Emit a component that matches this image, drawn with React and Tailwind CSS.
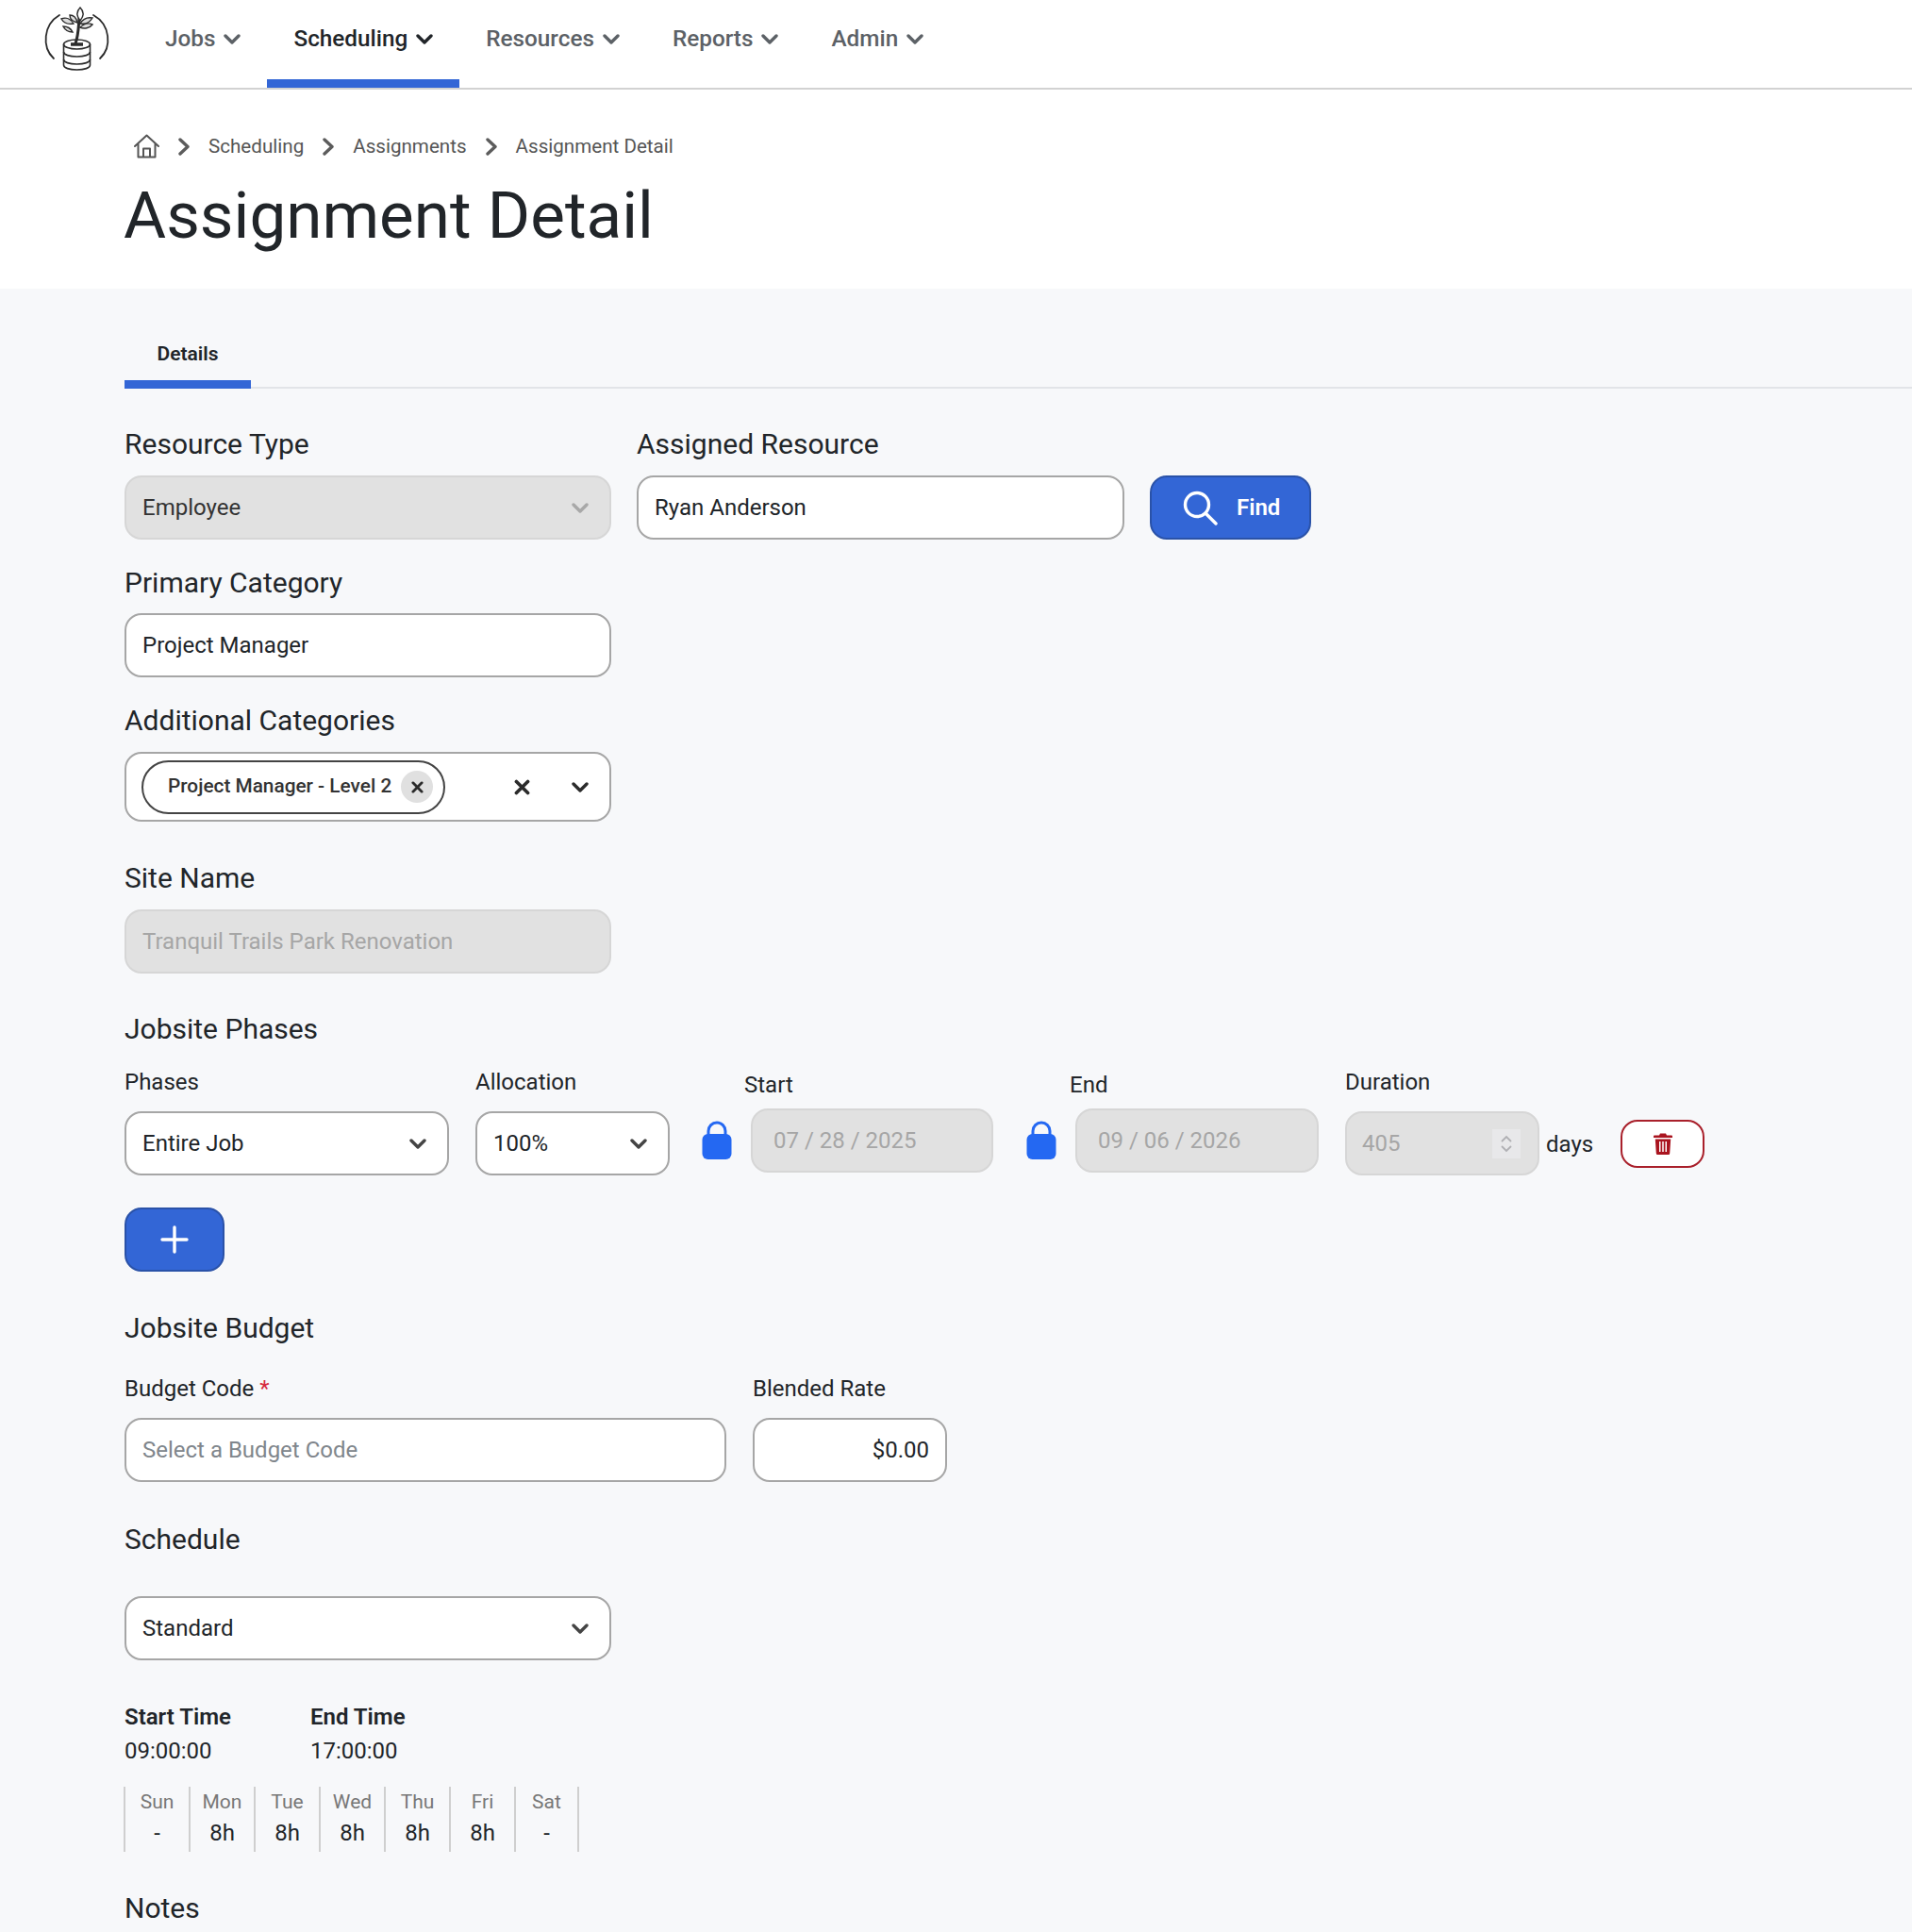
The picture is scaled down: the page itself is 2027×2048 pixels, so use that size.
import React from "react";

const Chevron = ({ className = "text-[#444]" }) => (
  <svg width="18" height="11" viewBox="0 0 18 11" fill="none" className={`shrink-0 ${className}`}>
    <path d="M2 2l7 7 7-7" stroke="currentColor" strokeWidth="3.4" strokeLinecap="round" strokeLinejoin="round" />
  </svg>
);

const Crumb = () => (
  <svg width="12" height="19" viewBox="0 0 12 19" fill="none" className="shrink-0 text-[#5c5c5c]">
    <path d="M2 2l8 7.500L2 17" stroke="currentColor" strokeWidth="3.4" strokeLinecap="round" strokeLinejoin="round" />
  </svg>
);

const Close = ({ size = 14 }) => (
  <svg width={size} height={size} viewBox="0 0 14 14" fill="none" className="text-[#2b2b2b]">
    <path d="M2 2l10 10M12 2L2 12" stroke="currentColor" strokeWidth="3" strokeLinecap="round" />
  </svg>
);

const Lock = ({ className = "" }) => (
  <svg width="32" height="42" viewBox="0 0 32 42" fill="none" className={`shrink-0 ${className}`}>
    <path d="M7 17V11a9 9 0 0 1 18 0v6" stroke="#2468f2" strokeWidth="3" />
    <rect x="0.5" y="14" width="31" height="27" rx="6" fill="#2468f2" />
  </svg>
);

const Logo = () => (
  <svg width="110" height="90" viewBox="0 0 110 90" fill="none" stroke="#2b2b2b" className="shrink-0">
    <path d="M33 16C16 26 14 50 27 62M69 16C87 26 89 50 76 62" strokeWidth="1.800" strokeLinecap="round" />
    <path d="M37.500 47v22c0 3 6 5 14 5s14-2 14-5V47" strokeWidth="1.600" />
    <ellipse cx="51.500" cy="47" rx="14" ry="5" strokeWidth="1.600" />
    <path d="M37.500 55c0 3 6 5 14 5s14-2 14-5M37.500 63c0 3 6 5 14 5s14-2 14-5" strokeWidth="1.600" />
    <path d="M50 46c3-8 3-14 4-27" strokeWidth="3" />
    <path d="M45 47h13" strokeWidth="3.500" />
    <path d="M55 8c-4 4-4 9 0 14 4-5 4-10 0-14z" strokeWidth="1.400" fill="#fff" />
    <path d="M35 20c5-2 10 0 13 5-5 1-10 0-13-5zM44 16c4 0 7 3 8 8-4-1-8-3-8-8z" strokeWidth="1.400" fill="#ddd" />
    <path d="M68 19c-5-1-10 1-13 6 5 1 10-1 13-6zM68 26c-4-2-9-1-13 3 4 2 10 1 13-3z" strokeWidth="1.400" fill="#ddd" />
    <path d="M37 28c4 0 8 2 10 6-4 0-8-2-10-6z" strokeWidth="1.400" fill="#ddd" />
  </svg>
);

const NavItem = ({ label, active }) => (
  <div
    className={`h-[93px] px-7 pb-0.5 flex items-center gap-[9px] border-b-[9px] text-[24.3px] font-medium ${
      active ? "border-[#3366d6] text-[#212529]" : "border-transparent text-[#5c6166]"
    }`}
  >
    {label}
    <Chevron className={active ? "text-[#212529]" : "text-[#5c6166]"} />
  </div>
);

const SectionLabel = ({ children, className = "" }) => (
  <div className={`h-9 leading-9 text-[30px] text-[#212529] ${className}`}>{children}</div>
);

const SmallLabel = ({ children, className = "" }) => (
  <div className={`h-[30px] leading-[30px] text-2xl text-[#212529] ${className}`}>{children}</div>
);

const Box = ({ children, className = "" }) => (
  <div
    className={`h-[68px] px-[17px] flex items-center justify-between rounded-[18px] border-2 border-[#a6a6a6] bg-white text-2xl text-[#212529] ${className}`}
  >
    {children}
  </div>
);

const Disabled = ({ children, className = "" }) => (
  <div
    className={`h-[68px] flex items-center rounded-[18px] border-2 border-[#d6d6d6] bg-[#e1e1e1] text-2xl text-[#a6a6a6] ${className}`}
  >
    {children}
  </div>
);

const days = [
  ["Sun", "-"],
  ["Mon", "8h"],
  ["Tue", "8h"],
  ["Wed", "8h"],
  ["Thu", "8h"],
  ["Fri", "8h"],
  ["Sat", "-"],
];

const App = () => {
  return (
    <div className="h-[2048px] overflow-hidden bg-white font-['Roboto',sans-serif]">
      {/* Top nav */}
      <nav className="flex h-[95px] border-b-2 border-[#d2d2d2] pl-[30px]">
        <Logo />
        <div className="ml-[7px] flex items-start">
          <NavItem label="Jobs" />
          <NavItem label="Scheduling" active />
          <NavItem label="Resources" />
          <NavItem label="Reports" />
          <NavItem label="Admin" />
        </div>
      </nav>

      {/* Page header */}
      <header className="h-[211px] pl-[132px] pt-[46px]">
        <div className="flex h-7 items-center gap-5 pl-[10px] text-[20.6px] text-[#555]">
          <svg width="27" height="26" viewBox="0 0 27 26" fill="none" className="shrink-0 text-[#555]">
            <path
              d="M1 13L13.500 1.500 26 13M4.500 10.500V24.500h18V10.500M10 24.500V15.500h7v9"
              stroke="currentColor"
              strokeWidth="2"
              strokeLinejoin="round"
              strokeLinecap="round"
            />
          </svg>
          <Crumb />
          <span>Scheduling</span>
          <Crumb />
          <span>Assignments</span>
          <Crumb />
          <span>Assignment Detail</span>
        </div>
        <h1 className="mt-[17px] -ml-px text-[69.2px] leading-[86px] font-normal text-[#212529]">Assignment Detail</h1>
      </header>

      {/* Form */}
      <main className="h-full bg-[#f7f8fa] pl-[132px] pt-[44px]">
        <div className="flex border-b-2 border-[#e2e4e8]">
          <div className="-mb-[2px] flex h-[62px] w-[134px] items-center justify-center border-b-[9px] border-[#3366d6] pb-[2px] text-[21px] font-semibold text-[#212529]">
            Details
          </div>
        </div>

        <div className="mt-[41px] flex gap-[27px]">
          <div className="w-[516px]">
            <SectionLabel className="mb-[15px]">Resource Type</SectionLabel>
            <Disabled className="justify-between pl-[17px] pr-[22px] !text-[#333]">
              Employee
              <Chevron className="text-[#a8a8a8]" />
            </Disabled>
          </div>
          <div className="w-[517px]">
            <SectionLabel className="mb-[15px]">Assigned Resource</SectionLabel>
            <Box>Ryan Anderson</Box>
          </div>
          <button className="mt-[51px] flex h-[68px] w-[171px] items-center gap-[20px] rounded-[18px] border-2 border-[#2a52a8] bg-[#3366d6] pl-[33px] text-2xl font-semibold text-white">
            <svg width="37" height="37" viewBox="0 0 37 37" fill="none" className="shrink-0">
              <circle cx="15" cy="15" r="12.500" stroke="white" strokeWidth="3.400" />
              <path d="M24 24l11 11" stroke="white" strokeWidth="3.400" strokeLinecap="round" />
            </svg>
            Find
          </button>
        </div>

        <SectionLabel className="mt-[28px] mb-[14px]">Primary Category</SectionLabel>
        <Box className="w-[516px]">Project Manager</Box>

        <SectionLabel className="mt-[28px] mb-[15px]">Additional Categories</SectionLabel>
        <div className="flex h-[74px] w-[516px] items-center rounded-[18px] border-2 border-[#a6a6a6] bg-white pl-4 pr-[22px]">
          <div className="flex h-[57px] w-[322px] items-center justify-between rounded-full border-2 border-[#444] pl-[26px] pr-[11px] text-[20.8px] font-medium text-[#333]">
            Project Manager - Level 2
            <span className="flex h-[34px] w-[34px] items-center justify-center rounded-full bg-[#e0e0e0]">
              <Close size={13} />
            </span>
          </div>
          <div className="ml-auto mr-[44px]">
            <Close size={17} />
          </div>
          <Chevron className="text-[#2b2b2b]" />
        </div>

        <SectionLabel className="mt-[42px] mb-[15px]">Site Name</SectionLabel>
        <Disabled className="w-[516px] px-[17px]">Tranquil Trails Park Renovation</Disabled>

        <SectionLabel className="mt-[41px] mb-[23px]">Jobsite Phases</SectionLabel>
        <div className="flex items-start">
          <div className="w-[344px]">
            <SmallLabel className="mb-4">Phases</SmallLabel>
            <Box className="pr-[22px]">
              Entire Job
              <Chevron />
            </Box>
          </div>
          <div className="ml-[28px] w-[206px]">
            <SmallLabel className="mb-4">Allocation</SmallLabel>
            <Box className="pr-[22px]">
              100%
              <Chevron />
            </Box>
          </div>
          <Lock className="ml-[34px] mt-[56px]" />
          <div className="ml-[20px] w-[257px] pt-[3px]">
            <SmallLabel className="-ml-[7px] mb-[10px]">Start</SmallLabel>
            <Disabled className="pl-[22px]">07 / 28 / 2025</Disabled>
          </div>
          <Lock className="ml-[35px] mt-[56px]" />
          <div className="ml-[20px] w-[258px] pt-[3px]">
            <SmallLabel className="-ml-[6px] mb-[10px]">End</SmallLabel>
            <Disabled className="pl-[22px]">09 / 06 / 2026</Disabled>
          </div>
          <div className="ml-[28px] w-[206px]">
            <SmallLabel className="mb-4">Duration</SmallLabel>
            <Disabled className="justify-between pl-[16px] pr-[18px]">
              405
              <span className="flex h-[31px] w-[30px] flex-col items-center justify-center gap-[3px] bg-[#e8e8ea]">
                <svg width="12" height="8" viewBox="0 0 12 8" fill="none">
                  <path d="M1.500 6.500L6 2l4.500 4.500" stroke="#b0b0b4" strokeWidth="1.800" strokeLinecap="round" />
                </svg>
                <svg width="12" height="8" viewBox="0 0 12 8" fill="none">
                  <path d="M1.500 1.500L6 6l4.500-4.500" stroke="#b0b0b4" strokeWidth="1.800" strokeLinecap="round" />
                </svg>
              </span>
            </Disabled>
          </div>
          <div className="ml-[7px] mt-[66px] h-[30px] w-[79px] text-2xl leading-[30px] text-[#212529]">days</div>
          <button className="mt-[55px] flex h-[51px] w-[89px] items-center justify-center rounded-[18px] border-2 border-[#a9202b] bg-white">
            <svg width="20" height="23" viewBox="0 0 20 23" className="shrink-0">
              <path d="M7 0.500h6l1 2h5a1 1 0 0 1 1 1v1.500H0V3.500a1 1 0 0 1 1-1h5z" fill="#a9141f" />
              <path
                fillRule="evenodd"
                d="M1.800 6.500h16.400l-1 15a1.500 1.500 0 0 1-1.500 1.500H4.300a1.500 1.500 0 0 1-1.500-1.500zM6 9v11h1.500V9zM9.250 9v11h1.500V9zM12.500 9v11H14V9z"
                fill="#a9141f"
              />
            </svg>
          </button>
        </div>

        <button className="mt-[34px] flex h-[68px] w-[106px] items-center justify-center rounded-[18px] border-2 border-[#2a52a8] bg-[#3366d6]">
          <svg width="30" height="30" viewBox="0 0 30 30" fill="none">
            <path d="M15 2v26M2 15h26" stroke="white" strokeWidth="3.400" strokeLinecap="round" />
          </svg>
        </button>

        <SectionLabel className="mt-[42px] mb-[31px]">Jobsite Budget</SectionLabel>
        <div className="flex gap-[28px]">
          <div className="w-[638px]">
            <SmallLabel className="mb-4">
              Budget Code <span className="text-[#d6293e]">*</span>
            </SmallLabel>
            <Box className="!text-[#80868c]">Select a Budget Code</Box>
          </div>
          <div className="w-[206px]">
            <SmallLabel className="mb-4">Blended Rate</SmallLabel>
            <Box className="!justify-end">$0.00</Box>
          </div>
        </div>

        <SectionLabel className="mt-[43px] mb-[42px]">Schedule</SectionLabel>
        <Box className="w-[516px] pr-[22px]">
          Standard
          <Chevron />
        </Box>

        <div className="mt-[45px] flex text-2xl leading-[30px] text-[#212529]">
          <div className="w-[197px]">
            <div className="font-semibold">Start Time</div>
            <div className="mt-[6px]">09:00:00</div>
          </div>
          <div>
            <div className="font-semibold">End Time</div>
            <div className="mt-[6px]">17:00:00</div>
          </div>
        </div>

        <div className="mt-[23px] -ml-px flex h-[69px] w-fit border-r-2 border-[#cfcfcf]">
          {days.map(([day, hours]) => (
            <div key={day} className="w-[69px] border-l-2 border-[#cfcfcf] pt-[3px] text-center last:w-[67px]">
              <div className="text-[21px] leading-[26px] text-[#777]">{day}</div>
              <div className="mt-[5px] text-2xl leading-[30px] text-[#212529]">{hours}</div>
            </div>
          ))}
        </div>

        <SectionLabel className="mt-[42px]">Notes</SectionLabel>
      </main>
    </div>
  );
};

export default App;
